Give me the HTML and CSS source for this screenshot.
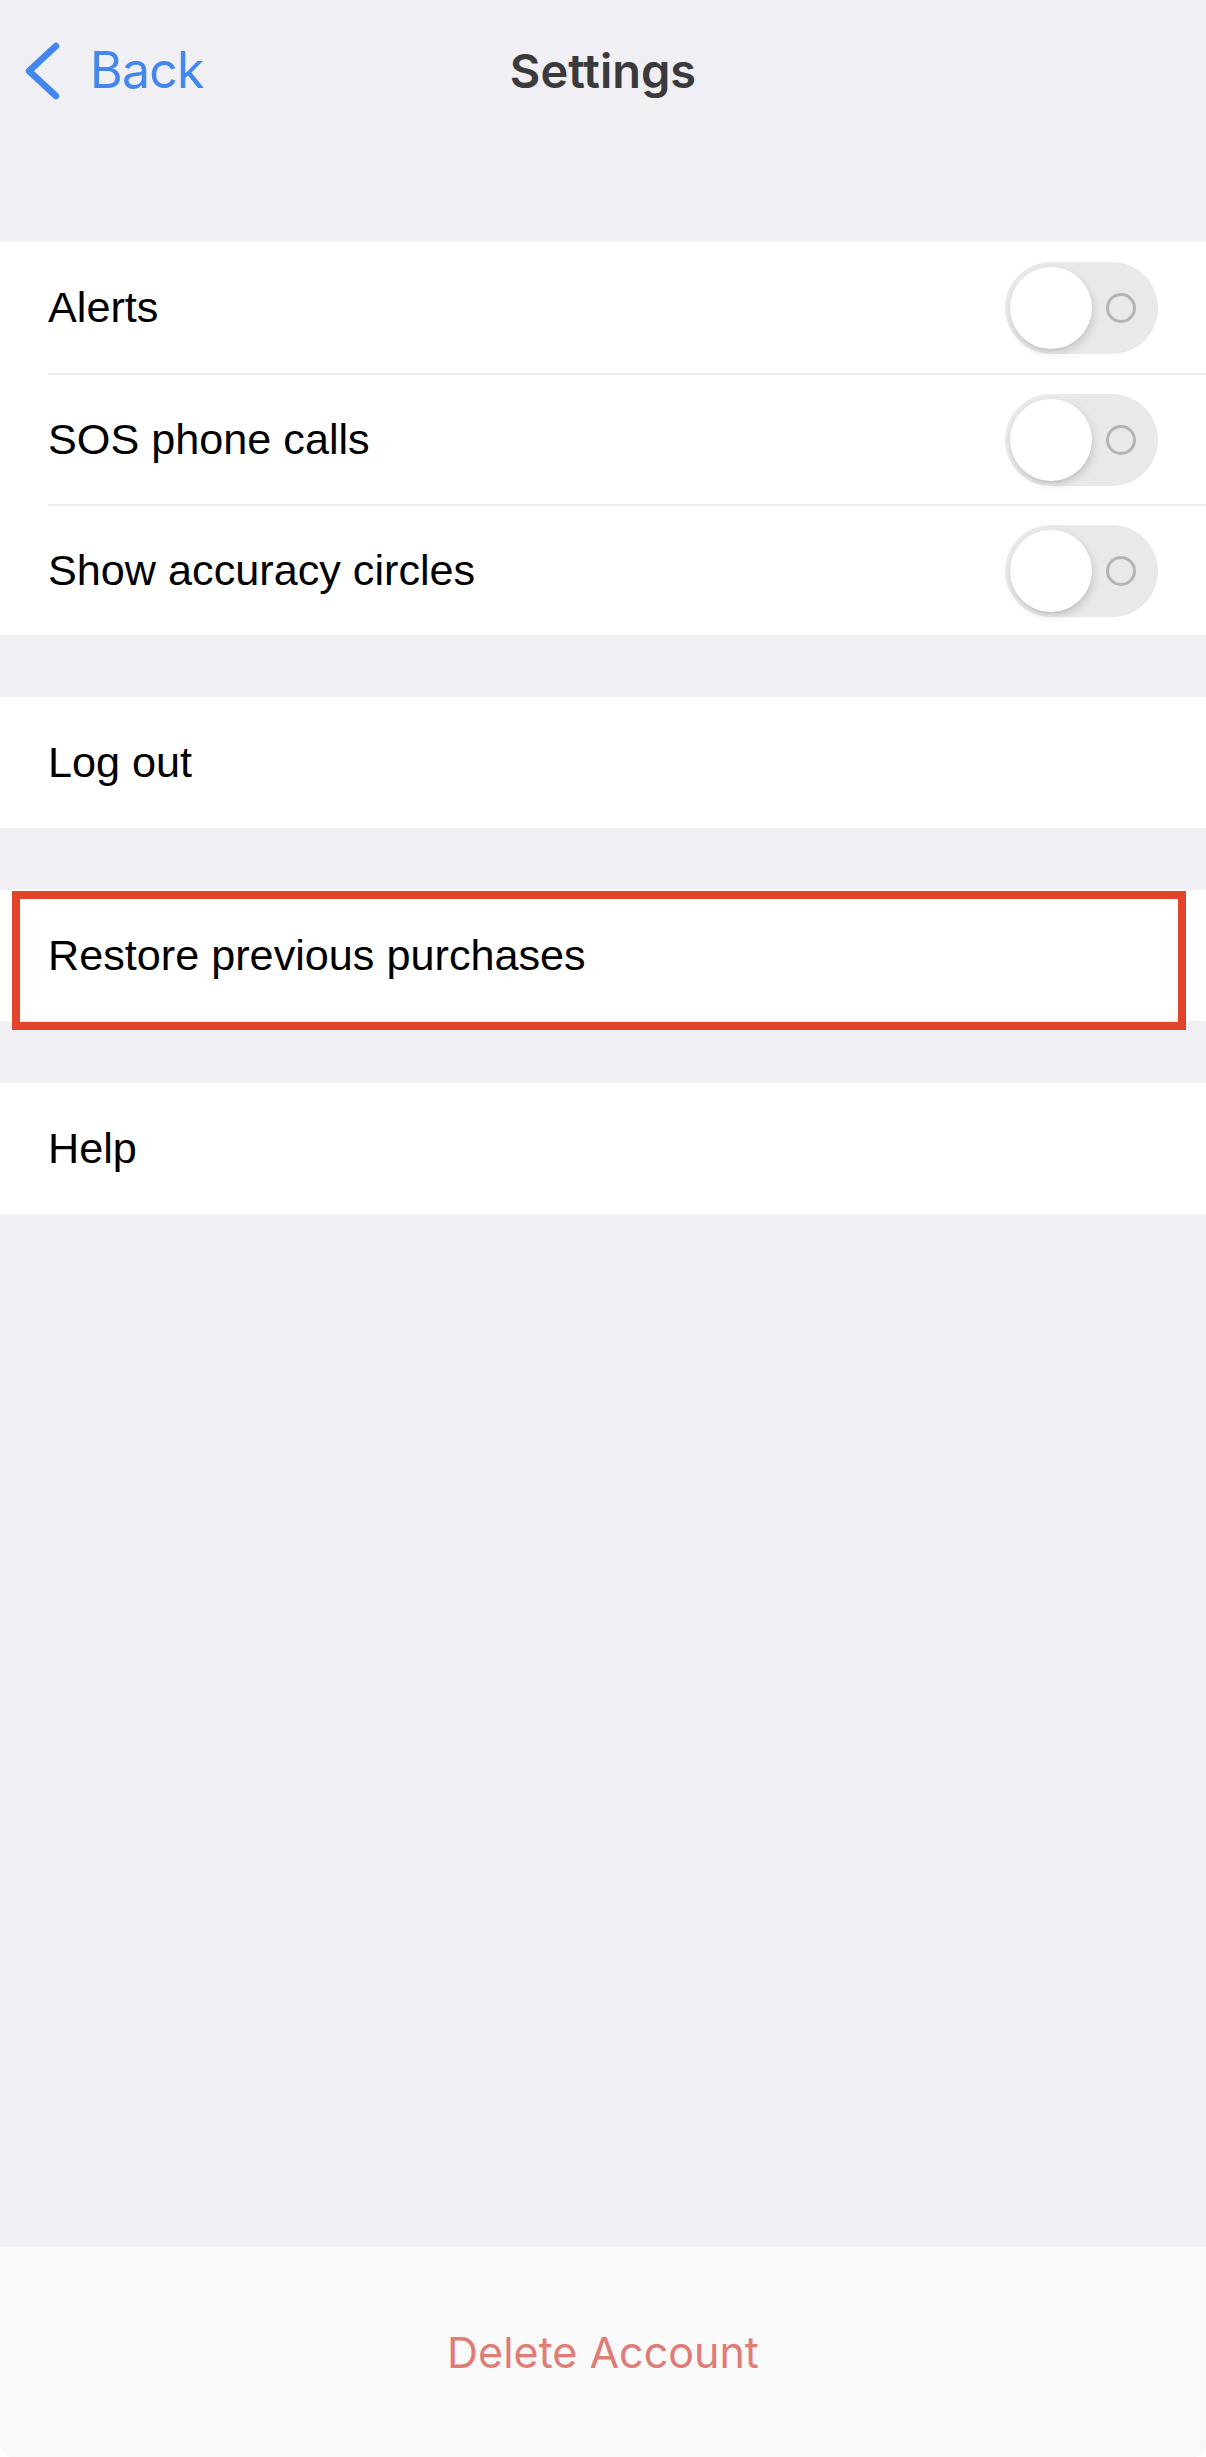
FILE: index.html
```html
<!DOCTYPE html>
<html lang="en">
<head>
    <meta charset="UTF-8">
    <meta name="viewport" content="width=device-width, initial-scale=1.0">
    <title>Settings</title>
    <link rel="stylesheet" href="styles.css">
</head>
<body>

    <div class="screen">
        <header class="navbar">
            <a class="back" href="#">
                <svg class="chevron" width="40" height="60" viewBox="0 0 40 60">
                    <polyline points="33,6 6,31 33,56" />
                </svg>
                <span>Back</span>
            </a>
            <h1 class="title">Settings</h1>
        </header>

        <div class="content">
            <!-- switches -->
            <ul class="group">
                <li class="row">
                    <span>Alerts</span>
                    <span class="switch"><span class="knob"></span><span class="off-mark"></span></span>
                </li>
                <li class="row">
                    <span>SOS phone calls</span>
                    <span class="switch"><span class="knob"></span><span class="off-mark"></span></span>
                </li>
                <li class="row">
                    <span>Show accuracy circles</span>
                    <span class="switch"><span class="knob"></span><span class="off-mark"></span></span>
                </li>
            </ul>

            <ul class="group">
                <li class="row">Log out</li>
            </ul>

            <ul class="group">
                <li class="row highlighted">
                    Restore previous purchases
                    <span class="outline"></span>
                </li>
            </ul>

            <ul class="group">
                <li class="row">Help</li>
            </ul>
        </div>

        <footer class="footer">
            <button class="delete">Delete Account</button>
        </footer>
    </div>

</body>
</html>
```

FILE: styles.css
```css
html, body {
    margin: 0;
    padding: 0;
    background-color: #ffffff;
}
.screen {
    display: flex;
    flex-direction: column;
    min-height: 2457px;
    background-color: #efeff4;
    border-radius: 0 0 14px 14px;
    overflow: hidden;
}

/* top bar */
.navbar {
    position: relative;
    display: flex;
    align-items: center;
    height: 140px;
    padding-left: 23px;
    margin-bottom: 102px;
}
.back {
    display: flex;
    align-items: center;
    gap: 27px;
    color: #4286ee;
    text-decoration: none;
    font-family: Inter, "Liberation Sans", sans-serif;
    font-size: 50px;
    letter-spacing: -0.8px;
}
.chevron polyline {
    fill: none;
    stroke: #4286ee;
    stroke-width: 6.5;
    stroke-linecap: round;
    stroke-linejoin: round;
}
.title {
    position: absolute;
    left: 0;
    right: 0;
    margin: 0;
    text-align: center;
    font-family: Inter, "Liberation Sans", sans-serif;
    font-size: 47px;
    font-weight: 600;
    color: #3a3a3c;
    pointer-events: none;
}

/* grouped list */
.content {
    flex: 1;
    display: flex;
    flex-direction: column;
    gap: 62px;
}
.group {
    list-style: none;
    margin: 0;
    padding: 0 0 0 48px;
    background-color: #ffffff;
}
.row {
    position: relative;
    box-sizing: border-box;
    display: flex;
    align-items: center;
    justify-content: space-between;
    height: 131px;
    padding-right: 48px;
    font-family: "Liberation Sans", Arial, sans-serif;
    font-size: 43.2px;
    color: #000000;
}
.row + .row {
    border-top: 2px solid #eeeef1;
}

/* off switch */
.switch {
    position: relative;
    display: flex;
    align-items: center;
    width: 153px;
    height: 92px;
    border-radius: 46px;
    background-color: #e9e9eb;
}
.knob {
    position: absolute;
    left: 5px;
    top: 5px;
    width: 82px;
    height: 82px;
    border-radius: 50%;
    background-color: #ffffff;
    box-shadow: 2px 4px 8px rgba(0, 0, 0, 0.13), 0 2px 2px rgba(0, 0, 0, 0.05);
}
.off-mark {
    position: absolute;
    left: 101px;
    top: 31px;
    box-sizing: border-box;
    width: 30px;
    height: 30px;
    border: 3px solid #b4b4b6;
    border-radius: 50%;
}

.outline {
    position: absolute;
    left: -36px;
    right: 20px;
    top: 1px;
    bottom: -9px;
    border: 8px solid #e4432b;
    pointer-events: none;
}

/* bottom action */
.footer {
    display: flex;
    align-items: center;
    justify-content: center;
    height: 210px;
    background-color: #f9f9fa;
}
.delete {
    border: none;
    background: none;
    padding: 0;
    font-family: Inter, "Liberation Sans", sans-serif;
    font-size: 43px;
    color: #e07c76;
    cursor: pointer;
}
```
